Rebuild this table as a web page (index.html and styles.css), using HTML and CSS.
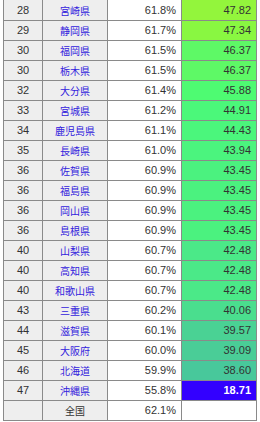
FILE: index.html
```html
<!DOCTYPE html>
<html lang="ja">
<head>
<meta charset="utf-8">
<link rel="stylesheet" href="styles.css">
</head>
<body>
<table class="rank">
<colgroup><col class="c-rank"><col class="c-name"><col class="c-pct"><col class="c-val"></colgroup>
<tbody>
<tr class="first"><td class="r">28</td><td class="n"><a>宮崎県</a></td><td class="p">61.8%</td><td class="v" style="background:#93f53c">47.82</td></tr>
<tr><td class="r">29</td><td class="n"><a>静岡県</a></td><td class="p">61.7%</td><td class="v" style="background:#89f741">47.34</td></tr>
<tr><td class="r">30</td><td class="n"><a>福岡県</a></td><td class="p">61.5%</td><td class="v" style="background:#5ef966">46.37</td></tr>
<tr><td class="r">30</td><td class="n"><a>栃木県</a></td><td class="p">61.5%</td><td class="v" style="background:#5ef966">46.37</td></tr>
<tr><td class="r">32</td><td class="n"><a>大分県</a></td><td class="p">61.4%</td><td class="v" style="background:#4efb72">45.88</td></tr>
<tr><td class="r">33</td><td class="n"><a>宮城県</a></td><td class="p">61.2%</td><td class="v" style="background:#4bf87a">44.91</td></tr>
<tr><td class="r">34</td><td class="n"><a>鹿児島県</a></td><td class="p">61.1%</td><td class="v" style="background:#4bf67c">44.43</td></tr>
<tr><td class="r">35</td><td class="n"><a>長崎県</a></td><td class="p">61.0%</td><td class="v" style="background:#4bf47e">43.94</td></tr>
<tr><td class="r">36</td><td class="n"><a>佐賀県</a></td><td class="p">60.9%</td><td class="v" style="background:#4bf27f">43.45</td></tr>
<tr><td class="r">36</td><td class="n"><a>福島県</a></td><td class="p">60.9%</td><td class="v" style="background:#4bf27f">43.45</td></tr>
<tr><td class="r">36</td><td class="n"><a>岡山県</a></td><td class="p">60.9%</td><td class="v" style="background:#4bf27f">43.45</td></tr>
<tr><td class="r">36</td><td class="n"><a>島根県</a></td><td class="p">60.9%</td><td class="v" style="background:#4bf27f">43.45</td></tr>
<tr><td class="r">40</td><td class="n"><a>山梨県</a></td><td class="p">60.7%</td><td class="v" style="background:#4be988">42.48</td></tr>
<tr><td class="r">40</td><td class="n"><a>高知県</a></td><td class="p">60.7%</td><td class="v" style="background:#4be988">42.48</td></tr>
<tr><td class="r">40</td><td class="n"><a>和歌山県</a></td><td class="p">60.7%</td><td class="v" style="background:#4be988">42.48</td></tr>
<tr><td class="r">43</td><td class="n"><a>三重県</a></td><td class="p">60.2%</td><td class="v" style="background:#4ade8e">40.06</td></tr>
<tr><td class="r">44</td><td class="n"><a>滋賀県</a></td><td class="p">60.1%</td><td class="v" style="background:#4ad294">39.57</td></tr>
<tr><td class="r">45</td><td class="n"><a>大阪府</a></td><td class="p">60.0%</td><td class="v" style="background:#4acd97">39.09</td></tr>
<tr><td class="r">46</td><td class="n"><a>北海道</a></td><td class="p">59.9%</td><td class="v" style="background:#48c89b">38.60</td></tr>
<tr><td class="r">47</td><td class="n"><a>沖縄県</a></td><td class="p">55.8%</td><td class="v min" style="background:#3300ff">18.71</td></tr>
<tr><td class="r"></td><td class="n total">全国</td><td class="p">62.1%</td><td class="v"></td></tr>
</tbody>
</table>
</body>
</html>
```
FILE: styles.css
```css
html, body {
  margin: 0;
  padding: 0;
  background: #ffffff;
}
body {
  font-family: "Liberation Sans", Arial, "Noto Sans CJK JP", sans-serif;
  font-size: 11px;
  color: #333333;
}
.rank {
  border-collapse: collapse;
  table-layout: fixed;
  width: 254px;
  margin: -1px 0 0 3px;
}
.c-rank { width: 39px; }
.c-name { width: 65px; }
.c-pct { width: 74px; }
.c-val { width: 75px; }
.rank td {
  border: 1px solid #8a8a8a;
  height: 19px;
  padding: 0 5px;
  line-height: 19px;
  white-space: nowrap;
  overflow: hidden;
}
.rank tr.first td {
  height: 20px;
}
.r {
  background: #eeeeee;
  text-align: center;
}
.n {
  background: #eeeeee;
  text-align: center;
  font-family: "Noto Sans CJK JP", sans-serif;
  font-size: 10px;
}
.n a {
  color: #3322dd;
  text-decoration: none;
}
.total {
  color: #333333;
}
.p {
  background: #ffffff;
  text-align: right;
}
.v {
  text-align: right;
  background: #ffffff;
}
.min {
  color: #ffffff;
  font-weight: bold;
}
```
